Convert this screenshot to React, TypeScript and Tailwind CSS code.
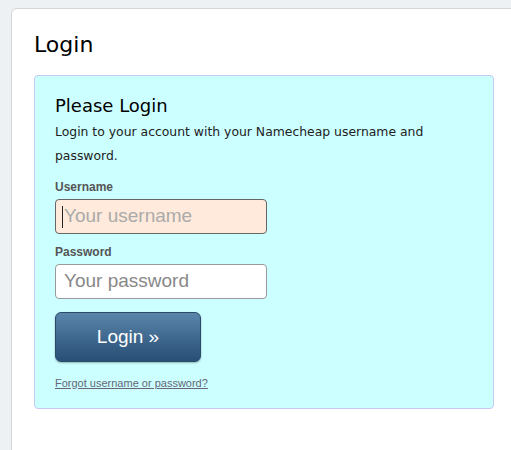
import React from "react";

export default function App() {
  return (
    <div className="h-[450px] w-[511px] overflow-hidden bg-[#eef1f4] pl-[11px] pt-[8px]">
      <div className="h-[520px] w-[560px] rounded-tl-[6px] border border-[#d3d6d9] bg-white pl-[22px] pt-[22px]">
        <h1 className="text-[22px] leading-[28px] text-black" style={{ fontFamily: '"DejaVu Sans", sans-serif' }}>
          Login
        </h1>
        <div className="mt-[16px] h-[334px] w-[460px] rounded-[4px] border border-[#c8c8f4] bg-[#ccffff] pl-[20px] pt-[18px]">
          <h2 className="text-[18px] leading-[24px] text-black" style={{ fontFamily: '"DejaVu Sans", sans-serif' }}>
            Please Login
          </h2>
          <p className="mt-[2px] w-[420px] text-[12.4px] leading-[24px] text-[#222]" style={{ fontFamily: '"DejaVu Sans", sans-serif' }}>
            Login to your account with your Namecheap username and password.
          </p>
          <div style={{ fontFamily: '"Liberation Sans", Arial, sans-serif' }}>
            <label className="mt-[11px] block text-[12px] font-bold leading-[16px] text-[#555]">Username</label>
            <div className="mt-[4px] flex h-[35px] w-[212px] items-center rounded-[4px] border border-[#666] bg-[#ffeadb] pl-[6px] text-[19px] text-[#aaa]">
              <span className="mr-[1px] inline-block h-[22px] w-[1px] bg-[#222]" />
              Your username
            </div>
            <label className="mt-[10px] block text-[12px] font-bold leading-[16px] text-[#555]">Password</label>
            <div className="mt-[4px] flex h-[35px] w-[212px] items-center rounded-[4px] border border-[#999] bg-white pl-[8px] text-[19px] text-[#888]">
              Your password
            </div>
            <button className="mt-[13px] flex h-[50px] w-[146px] items-center justify-center rounded-[6px] border border-[#2a4a68] bg-gradient-to-b from-[#5a85aa] to-[#284f76] text-[19px] text-white shadow-[0_1px_2px_rgba(0,0,0,0.3)]">
              Login »
            </button>
            <a className="mt-[14px] block text-[11px] leading-[14px] text-[#667] underline">
              Forgot username or password?
            </a>
          </div>
        </div>
      </div>
    </div>
  );
}
